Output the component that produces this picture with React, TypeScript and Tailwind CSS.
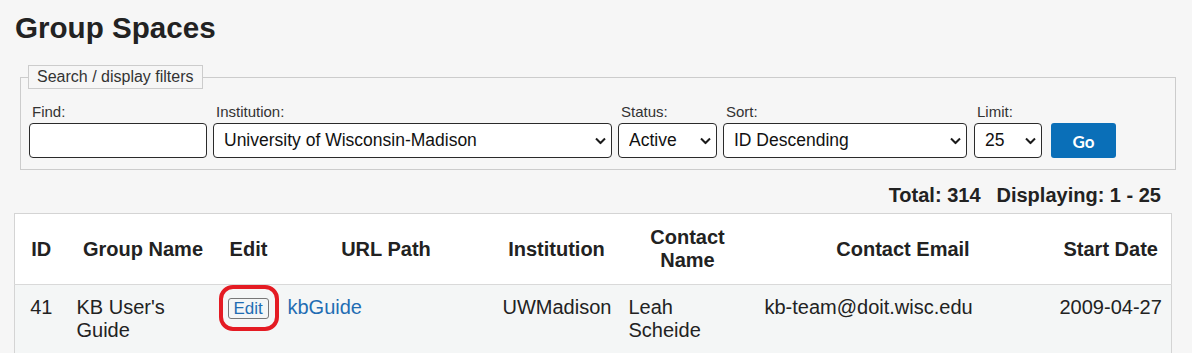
import React from "react";

function Chevron() {
  return (
    <svg
      width="11"
      height="7"
      viewBox="0 0 11 7"
      className="pointer-events-none absolute right-[6px] top-1/2 -translate-y-1/2"
    >
      <path d="M1 1 L5.5 5.5 L10 1" fill="none" stroke="#1a1a1a" strokeWidth="2" />
    </svg>
  );
}

function Field({
  label,
  width,
  className,
  children,
}: {
  label: string;
  width: string;
  className?: string;
  children: React.ReactNode;
}) {
  return (
    <div className={`flex flex-col ${width} ${className ?? ""}`}>
      <label className="pl-[3px] text-[15px] leading-[20px] text-[#333]">{label}</label>
      <div className="relative mt-[1px] h-[35px]">{children}</div>
    </div>
  );
}

function Select({ value }: { value: string }) {
  return (
    <>
      <select
        defaultValue={value}
        className="h-full w-full appearance-none rounded-[4px] border border-[#2a2a2a] bg-white pl-[10px] text-[17.5px] leading-[33px] text-[#111] outline-none"
      >
        <option>{value}</option>
      </select>
      <Chevron />
    </>
  );
}

export default function App() {
  return (
    <div className="min-h-screen bg-[#f6f6f6] font-['Liberation_Sans',Arial,sans-serif] text-[#222]">
      <h1 className="pl-[15px] pt-[11px] text-[29.6px] font-bold leading-[33px] text-[#222]">Group Spaces</h1>

      <fieldset className="ml-[20px] mr-[16px] mt-[21px] min-w-0 border border-[#cccccc] pb-[11px] pl-[8px] pr-[8px] pt-[13px]">
        <legend className="ml-[-1px] border border-[#cccccc] px-[8px] text-[16px] leading-[22px] text-[#333]">
          Search / display filters
        </legend>
        <div className="flex items-end">
          <Field label="Find:" width="w-[178px]">
            <input
              type="text"
              className="h-full w-full rounded-[4px] border border-[#2a2a2a] bg-white px-[8px] text-[17.5px] outline-none"
            />
          </Field>
          <Field label="Institution:" width="w-[399px]" className="ml-[6px]">
            <Select value="University of Wisconsin-Madison" />
          </Field>
          <Field label="Status:" width="w-[99px]" className="ml-[6px]">
            <Select value="Active" />
          </Field>
          <Field label="Sort:" width="w-[244px]" className="ml-[6px]">
            <Select value="ID Descending" />
          </Field>
          <Field label="Limit:" width="w-[68px]" className="ml-[7px]">
            <Select value="25" />
          </Field>
          <button className="ml-[9px] h-[35px] w-[65px] rounded-[3px] bg-[#0a6fb8] pt-[2px] font-['Lato',sans-serif] text-[17px] font-bold text-white">
            Go
          </button>
        </div>
      </fieldset>

      <div className="mt-[13px] pr-[31px] text-right text-[20px] font-bold leading-[24px] text-[#222]">
        <span>Total: 314</span>
        <span className="ml-[16px]">Displaying: 1 - 25</span>
      </div>

      <table className="ml-[14px] mt-[6px] w-[1157px] table-fixed border-collapse border border-[#d4d4d4] text-[20px] leading-[23px]">
        <colgroup>
          <col className="w-[53px]" />
          <col className="w-[151px]" />
          <col className="w-[60px]" />
          <col className="w-[215px]" />
          <col className="w-[126px]" />
          <col className="w-[136px]" />
          <col className="w-[295px]" />
          <col className="w-[121px]" />
        </colgroup>
        <thead>
          <tr className="border-b border-[#d9d9d9] bg-white">
            {["ID", "Group Name", "Edit", "URL Path", "Institution", "Contact Name", "Contact Email", "Start Date"].map(
              (h) => (
                <th key={h} className="px-[9px] py-[12px] text-center align-middle font-bold text-[#222]">
                  {h}
                </th>
              )
            )}
          </tr>
        </thead>
        <tbody>
          <tr className="bg-[#f4f6f6] text-[#222]">
            <td className="px-[9px] pb-[16px] pt-[11px] text-center align-top">41</td>
            <td className="px-[9px] pb-[16px] pt-[11px] align-top">KB User's Guide</td>
            <td className="px-[9px] pb-[16px] pt-[11px] align-top">
              <span className="relative mt-[2px] inline-block align-top">
                <span className="block rounded-[3px] border border-[#777] px-[5px] text-[17px] leading-[19px] text-[#1f6db3]">
                  Edit
                </span>
                <span className="pointer-events-none absolute left-[-9px] top-[-13px] h-[46px] w-[60px] rounded-[14px] border-[4px] border-[#e41b23]" />
              </span>
            </td>
            <td className="px-[9px] pb-[16px] pt-[11px] align-top">
              <a className="text-[#1f6db3]" href="#">
                kbGuide
              </a>
            </td>
            <td className="whitespace-nowrap px-[9px] pb-[16px] pt-[11px] align-top">UWMadison</td>
            <td className="px-[9px] pb-[16px] pt-[11px] align-top">Leah Scheide</td>
            <td className="px-[9px] pb-[16px] pt-[11px] align-top">kb-team@doit.wisc.edu</td>
            <td className="whitespace-nowrap px-[9px] pb-[16px] pt-[11px] align-top">2009-04-27</td>
          </tr>
        </tbody>
      </table>
    </div>
  );
}
